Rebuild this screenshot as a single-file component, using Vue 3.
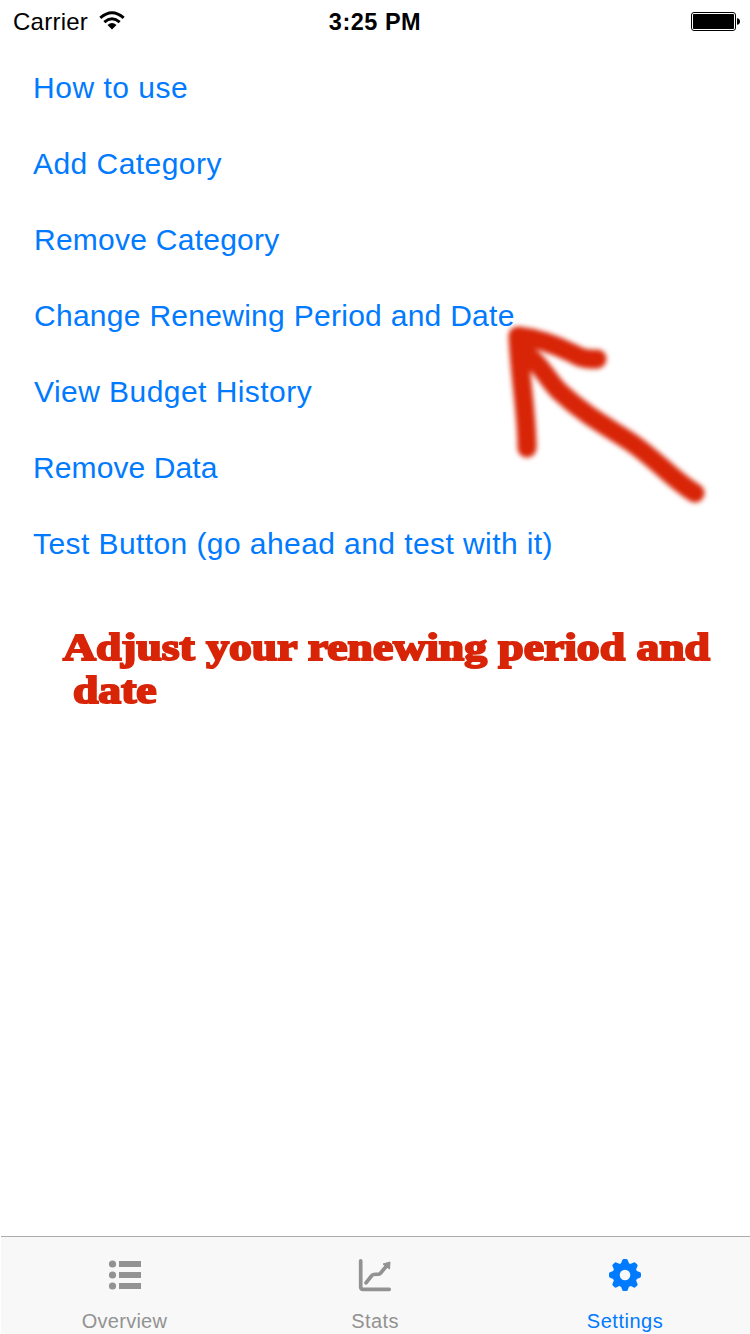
<script setup>
const actions = [
  { label: 'How to use', key: 'how' },
  { label: 'Add Category', key: 'add' },
  { label: 'Remove Category', key: 'remove' },
  { label: 'Change Renewing Period and Date', key: 'change' },
  { label: 'View Budget History', key: 'view' },
  { label: 'Remove Data', key: 'data' },
  { label: 'Test Button (go ahead and test with it)', key: 'test' },
]
</script>

<template>
  <div class="screen">
    <header class="status">
      <div class="carrier">
        <span class="carrier-name">Carrier</span>
        <svg class="wifi" width="26" height="20" viewBox="0 0 26 20">
          <g fill="none" stroke="#000" stroke-width="2.9">
            <path d="M1.3 6.9Q13-3.3 24.7 6.9" />
            <path d="M5.3 11.1Q13 4.5 20.7 11.1" />
          </g>
          <path d="M8.5 14Q13 10.2 17.5 14L13 18.4Z" />
        </svg>
      </div>
      <div class="time">3:25 PM</div>
      <div class="power">
        <svg width="50" height="20" viewBox="0 0 50 20">
          <rect x=".5" y=".5" width="44" height="18" rx="2.5" fill="#fff" stroke="#000" />
          <rect x="2" y="2" width="41" height="15" rx=".8" />
          <path d="M46 6.2q3 .4 3 3.3t-3 3.3z" />
        </svg>
      </div>
    </header>

    <main class="content">
      <nav class="actions">
        <a v-for="a in actions" :key="a.key" class="action" :class="a.key">{{ a.label }}</a>
      </nav>
      <p class="note">
        <span class="line first">Adjust your renewing period and</span>
        <span class="line second">date</span>
      </p>
      <svg class="arrow" width="240" height="220" viewBox="0 0 240 220">
        <g fill="none" stroke="#d82407" stroke-width="19" stroke-linecap="round" stroke-linejoin="round">
          <path d="M37 148C37 112 30 80 28 36C46 38 66 45 84 54Q93 60 107 59" />
          <path d="M31 52C50 60 56 79 70 92C98 118 120 128 142 143C168 161 184 181 205 193" />
        </g>
      </svg>
    </main>

    <footer class="tabs">
      <div class="tab">
        <svg width="34" height="34" viewBox="0 0 34 34" fill="#929292">
          <circle cx="4.5" cy="6" r="3.6" /><rect x="11" y="3" width="22" height="6" />
          <circle cx="4.5" cy="17" r="3.6" /><rect x="11" y="14" width="22" height="6" />
          <circle cx="4.5" cy="28" r="3.6" /><rect x="11" y="25" width="22" height="6" />
        </svg>
        <span class="overview">Overview</span>
      </div>
      <div class="tab">
        <svg width="34" height="34" viewBox="0 0 34 34">
          <g fill="none" stroke="#929292" stroke-width="3.7" stroke-linecap="round" stroke-linejoin="round">
            <path d="M2.7 2.8V29Q2.7 31.3 5 31.3H31.2" />
            <path d="M8 24.8L13.4 18Q14.3 16.6 15.5 16.5L20.8 16.2Q21.8 16.1 22.5 15.2L28.5 8" />
          </g>
          <path d="M25 6L32 4L31.5 11Z" fill="#929292" stroke="#929292" stroke-linejoin="round" />
        </svg>
        <span class="stats">Stats</span>
      </div>
      <div class="tab active">
        <svg width="34" height="34" viewBox="-17 -17 34 34" fill="#007aff">
          <circle r="8.7" fill="none" stroke="#007aff" stroke-width="6.8" />
          <path v-for="n in 8" :key="n" :transform="`rotate(${n * 45})`" d="M-5.2-10.6Q-3.4-12-2.9-14.4Q-2.6-16-1.3-16H1.3Q2.6-16 2.9-14.4Q3.4-12 5.2-10.6Z" />
        </svg>
        <span class="settings">Settings</span>
      </div>
    </footer>
  </div>
</template>

<style>
body { margin: 0; background: #fff; }
</style>

<style scoped>
.screen { position: relative; width: 750px; height: 1334px; display: flex; flex-direction: column; overflow: hidden; background: #fff; font-family: "Liberation Sans", Arial, sans-serif; }
.status { height: 44px; display: grid; grid-template-columns: 1fr auto 1fr; align-items: center; box-sizing: border-box; padding: 0 9px 0 13px; font-size: 24px; line-height: 28px; color: #000; }
.carrier { display: flex; align-items: center; gap: 11px; }
.carrier-name { letter-spacing: .25px; }
.wifi { margin-top: -2px; }
.time { font-weight: bold; font-size: 23.5px; letter-spacing: .5px; margin-right: 4px; }
.power { display: flex; justify-content: flex-end; }
.content { flex: 1; }
.actions { display: flex; flex-direction: column; align-items: flex-start; padding: 6px 0 0 33px; }
.action { height: 76px; line-height: 76px; font-size: 30px; color: #007aff; white-space: nowrap; }
.how { letter-spacing: .52px; }
.add { letter-spacing: .45px; }
.remove { letter-spacing: .25px; margin-left: 1px; }
.change { letter-spacing: .28px; margin-left: 1px; }
.view { letter-spacing: .45px; margin-left: 1px; }
.data { letter-spacing: .1px; }
.test { letter-spacing: .42px; }
.note { margin: 44px 0 0 63px; font-family: "Liberation Serif", serif; font-weight: bold; font-size: 38px; line-height: 43px; color: #d82407; -webkit-text-stroke: 2px #d82407; }
.line { display: block; width: max-content; white-space: nowrap; transform: scaleX(1.2); transform-origin: left; }
.second { margin-left: 10px; }
.arrow { position: absolute; left: 490px; top: 300px; filter: blur(2.9px); }
.tabs { height: 98px; box-sizing: border-box; margin-left: 1px; border-top: 1px solid #acacac; background: #f8f8f8; display: grid; grid-template-columns: 247px 254px 246px; }
.tab { display: flex; flex-direction: column; align-items: center; padding-top: 21px; color: #929292; font-size: 20px; line-height: 24px; }
.tab span { margin-top: 17px; }
.overview { letter-spacing: .25px; }
.stats { letter-spacing: .4px; }
.settings { letter-spacing: .5px; }
.active { color: #007aff; }
</style>
